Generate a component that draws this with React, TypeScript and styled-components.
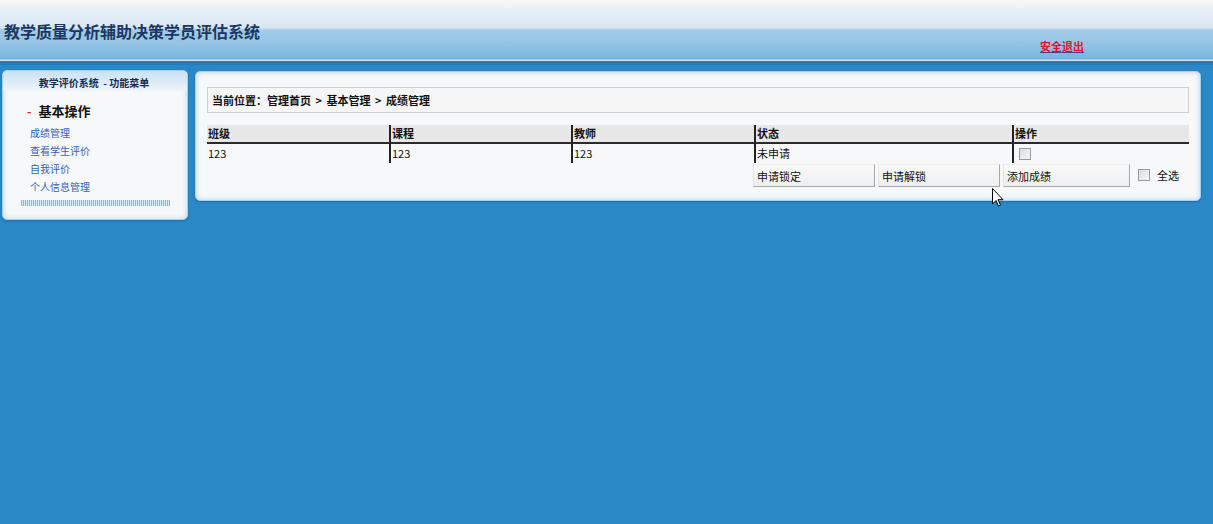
import React from "react";
import styled, { createGlobalStyle } from "styled-components";

const GlobalStyle = createGlobalStyle`
  html, body {
    margin: 0;
    padding: 0;
    background: #2a88c7;
  }
  body {
    font-family: "Noto Sans CJK SC", "Liberation Sans", sans-serif;
    font-size: 11px;
    color: #111;
  }
`;

const Page = styled.div`
  position: relative;
  width: 1213px;
  min-height: 524px;
  background: #2a88c7;
`;

const Header = styled.header`
  height: 61px;
  position: relative;
  background: linear-gradient(
    to bottom,
    #f6f7f9 0px,
    #e6eff7 12px,
    #d6e6f1 28px,
    #a3cce9 30px,
    #93c4e5 45px,
    #79b7e0 57px,
    #6cb1de 59px,
    #cde4f4 60px
  );
  border-bottom: 4px solid #1f7cbd;
  display: flex;
  align-items: center;
`;

const Title = styled.h1`
  margin: 0 0 0 4px;
  padding-top: 1px;
  font-size: 16px;
  font-weight: 700;
  color: #1b3762;
`;

const Logout = styled.a`
  position: absolute;
  left: 1040px;
  top: 38px;
  font-size: 11px;
  font-weight: 700;
  color: #e8102a;
  text-decoration: underline;
  text-decoration-color: #4a3a8a;
`;

const Main = styled.div`
  display: flex;
  align-items: flex-start;
  gap: 7px;
  padding: 5px 0 0 2px;
`;

const Panel = styled.div<{ $w: number; $h: number; $mt?: number }>`
  width: ${(p) => p.$w}px;
  height: ${(p) => p.$h}px;
  margin-top: ${(p) => p.$mt ?? 0}px;
  box-sizing: border-box;
  border: 1px solid #a9d0ec;
  border-radius: 5px;
  background: #f7f8f9;
  box-shadow: inset 0 0 4px 1px #c4def1, 0 1px 2px #1b6aa3;
`;

const SideHead = styled.div`
  height: 20px;
  border-radius: 4px 4px 0 0;
  background: linear-gradient(to bottom, #c9e1f3, #eef5fb);
  text-align: center;
  font-size: 10px;
  font-weight: 700;
  color: #1c2d4c;
  line-height: 24px;
  padding-right: 2px;
`;

const Group = styled.div`
  display: flex;
  align-items: center;
  gap: 7px;
  padding: 10px 0 0 24px;
  height: 18px;
`;

const Dash = styled.span`
  color: #e02020;
  font-size: 12px;
  font-weight: 700;
`;

const GroupName = styled.span`
  font-size: 13px;
  font-weight: 700;
  color: #111;
`;

const Links = styled.ul`
  list-style: none;
  margin: 5px 0 0 0;
  padding: 0 0 0 27px;
`;

const LinkItem = styled.li`
  height: 18px;
  line-height: 18px;
  font-size: 10px;
  color: #2f62b5;
`;

const Stripe = styled.div`
  margin: 4px 0 0 18px;
  width: 149px;
  height: 6px;
  background: repeating-linear-gradient(
    90deg,
    #7dbce6 0px,
    #7dbce6 1px,
    #d6ebf8 1px,
    #d6ebf8 2px
  );
`;

const Content = styled.div`
  padding: 15px 11px 0 11px;
`;

const Crumb = styled.div`
  height: 26px;
  box-sizing: border-box;
  border: 1px solid #cfcfcf;
  background: #f6f6f6;
  font-size: 11px;
  font-weight: 700;
  line-height: 24px;
  padding-left: 4px;
  color: #111;
  word-spacing: 2px;
`;

const Table = styled.div`
  margin-top: 12px;
  display: grid;
  grid-template-columns: 182px 182px 183px 258px 177px;
`;

const HeadCell = styled.div<{ $first?: boolean }>`
  height: 17px;
  line-height: 17px;
  background: #e7e7e7;
  font-weight: 700;
  font-size: 11px;
  border-bottom: 2px solid #2b2b2b;
  border-left: ${(p) => (p.$first ? "none" : "2px solid #222")};
  padding-left: 1px;
`;

const Cell = styled.div<{ $first?: boolean }>`
  height: 19px;
  line-height: 19px;
  font-size: 11px;
  border-left: ${(p) => (p.$first ? "none" : "2px solid #222")};
  padding-left: 1px;
  display: flex;
  align-items: center;
`;

const Box = styled.span<{ $ml?: number }>`
  display: inline-block;
  width: 10px;
  height: 10px;
  margin-left: ${(p) => p.$ml ?? 0}px;
  border: 1px solid #9a9a9a;
  background: linear-gradient(135deg, #dcdcdc, #f8f8f8);
`;

const Actions = styled.div`
  display: flex;
  align-items: center;
  justify-content: flex-end;
  gap: 3px;
  padding-right: 10px;
  margin-top: 1px;
`;

const Btn = styled.div<{ $w: number }>`
  width: ${(p) => p.$w}px;
  height: 23px;
  box-sizing: border-box;
  line-height: 22px;
  padding-left: 3px;
  font-size: 11px;
  background: linear-gradient(to bottom, #f9f9f9, #efefef);
  border-top: 1px solid #ececec;
  border-left: 1px solid #e4e4e4;
  border-right: 1px solid #a8a8a8;
  border-bottom: 1px solid #a8a8a8;
`;

const SelectAll = styled.label`
  display: flex;
  align-items: center;
  gap: 7px;
  margin-left: 5px;
  font-size: 11px;
  padding-bottom: 2px;
`;

const Cursor = styled.svg`
  position: absolute;
  left: 992px;
  top: 188px;
`;

const menu = ["成绩管理", "查看学生评价", "自我评价", "个人信息管理"];
const heads = ["班级", "课程", "教师", "状态", "操作"];
const row = ["123", "123", "123", "未申请"];

export default function App() {
  return (
    <Page>
      <GlobalStyle />
      <Header>
        <Title>教学质量分析辅助决策学员评估系统</Title>
        <Logout>安全退出</Logout>
      </Header>
      <Main>
        <Panel $w={186} $h={150}>
          <SideHead>教学评价系统&nbsp;&nbsp;- 功能菜单</SideHead>
          <Group>
            <Dash>-</Dash>
            <GroupName>基本操作</GroupName>
          </Group>
          <Links>
            {menu.map((m) => (
              <LinkItem key={m}>{m}</LinkItem>
            ))}
          </Links>
          <Stripe />
        </Panel>
        <Panel $w={1006} $h={130} $mt={1}>
          <Content>
            <Crumb>当前位置：管理首页 &gt; 基本管理 &gt; 成绩管理</Crumb>
            <Table>
              {heads.map((h, i) => (
                <HeadCell key={h} $first={i === 0}>
                  {h}
                </HeadCell>
              ))}
              {row.map((c, i) => (
                <Cell key={i} $first={i === 0}>
                  {c}
                </Cell>
              ))}
              <Cell>
                <Box $ml={4} />
              </Cell>
            </Table>
            <Actions>
              <Btn $w={122}>申请锁定</Btn>
              <Btn $w={122}>申请解锁</Btn>
              <Btn $w={127}>添加成绩</Btn>
              <SelectAll>
                <Box />
                全选
              </SelectAll>
            </Actions>
          </Content>
        </Panel>
      </Main>
      <Cursor width="12" height="19" viewBox="0 0 12 19">
        <path
          d="M0.5 0.5 L0.5 16 L4 12.5 L6.5 18 L8.5 17 L6 11.7 L11 11.7 Z"
          fill="#fff"
          stroke="#000"
          strokeWidth="1"
        />
      </Cursor>
    </Page>
  );
}
